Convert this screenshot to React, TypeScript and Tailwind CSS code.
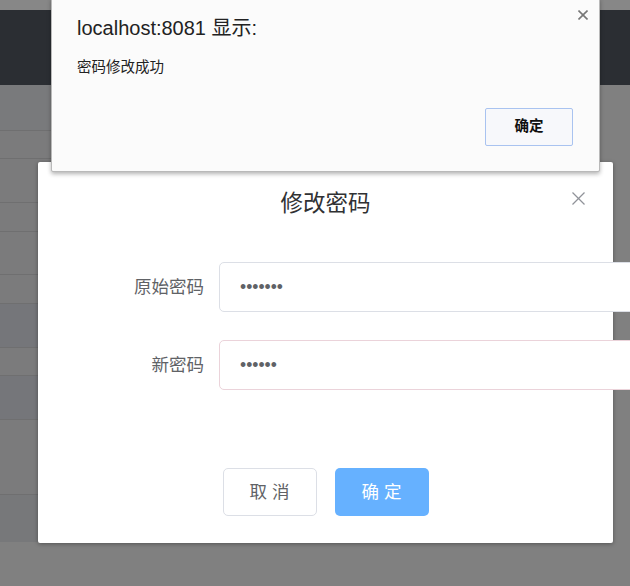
const rows = [
  { h: 'h-[46px]', bg: 'bg-[#797a7c]', line: true },
  { h: 'h-[28px]', bg: 'bg-[#7b7b7c]', line: true },
  { h: 'h-[44px]', bg: 'bg-[#7b7b7c]', line: true },
  { h: 'h-[29px]', bg: 'bg-[#7b7b7c]', line: true },
  { h: 'h-[43px]', bg: 'bg-[#7b7b7c]', line: true },
  { h: 'h-[29px]', bg: 'bg-[#7b7b7c]', line: true },
  { h: 'h-[44px]', bg: 'bg-[#75767a]', line: true },
  { h: 'h-[28px]', bg: 'bg-[#7b7b7c]', line: true },
  { h: 'h-[44px]', bg: 'bg-[#75767a]', line: true },
  { h: 'h-[75px]', bg: 'bg-[#7b7b7c]', line: true },
  { h: 'h-[47px]', bg: 'bg-[#77787a]', line: false },
];

function CloseIcon({ size, color, width }: { size: number; color: string; width: number }) {
  return (
    <svg width={size} height={size} viewBox={`0 0 ${size} ${size}`}>
      <line x1="0.5" y1="0.5" x2={size - 0.5} y2={size - 0.5} stroke={color} strokeWidth={width} />
      <line x1={size - 0.5} y1="0.5" x2="0.5" y2={size - 0.5} stroke={color} strokeWidth={width} />
    </svg>
  );
}

function PasswordRow({ label, value, border }: { label: string; value: string; border: string }) {
  return (
    <div className="flex items-center">
      <label className="w-[156px] shrink-0 pr-[15px] text-right text-[17.5px] leading-[50px] text-[#606266]">
        {label}
      </label>
      <input
        type="password"
        readOnly
        value={value}
        className={`h-[50px] w-[430px] shrink-0 rounded-[5px] border bg-white pl-[20px] text-[17.5px] text-[#606266] outline-none ${border}`}
        style={{ fontFamily: '"Liberation Sans", Arial, sans-serif' }}
      />
    </div>
  );
}

export default function App() {
  return (
    <div
      className="relative h-[586px] w-[630px] overflow-hidden bg-[#808080]"
      style={{ fontFamily: '"Liberation Sans", "Noto Sans CJK SC", sans-serif' }}
    >
      {/* page behind the mask */}
      <div className="h-[10px] bg-[#878787]" />
      <div className="h-[75px] bg-[#2b2e33]" />
      <div className="w-[580px]">
        {rows.map((r, i) => (
          <div key={i} className={`${r.h} ${r.bg} ${r.line ? 'border-b border-[#6f6f70]' : ''}`} />
        ))}
      </div>

      {/* 修改密码 dialog */}
      <div className="absolute left-[38px] top-[162px] flex h-[381px] w-[575px] flex-col rounded-[2px] bg-white shadow-[0_1px_4px_rgba(0,0,0,0.35)]">
        <div className="relative px-[25px] pb-[10px] pt-[27px]">
          <div className="text-center text-[22.5px] leading-[30px] text-[#303133]">修改密码</div>
          <button className="absolute right-[28px] top-[30px]">
            <CloseIcon size={13} color="#909399" width={1.2} />
          </button>
        </div>
        <div className="flex flex-col gap-[28px] px-[25px] pt-[33px]">
          <PasswordRow label="原始密码" value="1234567" border="border-[#dcdfe6]" />
          <PasswordRow label="新密码" value="123456" border="border-[#ebd3da]" />
        </div>
        <div className="mt-[78px] flex justify-center gap-[18px]">
          <button className="h-[48px] w-[94px] rounded-[5px] border border-[#dcdfe6] bg-white text-[17.5px] text-[#606266]">
            取 消
          </button>
          <button className="h-[48px] w-[94px] rounded-[5px] bg-[#66b1ff] text-[17.5px] text-white">
            确 定
          </button>
        </div>
      </div>

      {/* browser alert */}
      <div className="absolute left-[51px] top-[-2px] h-[174px] w-[549px] rounded-b-[2px] border border-[#b9b9b9] bg-[#fbfbfb] pl-[25px] pr-[26px] pt-[17px] shadow-[0_2px_4px_rgba(0,0,0,0.3)]">
        <div className="text-[20px] leading-[24px] text-[#222]">localhost:8081 显示:</div>
        <div className="mt-[17px] text-[14.5px] leading-[20px] text-[#222]">密码修改成功</div>
        <div className="mt-[31px] flex justify-end">
          <button className="h-[38px] w-[88px] rounded-[2px] border border-[#a9c3f0] bg-[#f7f8fb] text-[14.5px] font-bold text-[#111]">
            确定
          </button>
        </div>
        <button className="absolute right-[11px] top-[11px]">
          <CloseIcon size={10} color="#777" width={1.6} />
        </button>
      </div>
    </div>
  );
}
